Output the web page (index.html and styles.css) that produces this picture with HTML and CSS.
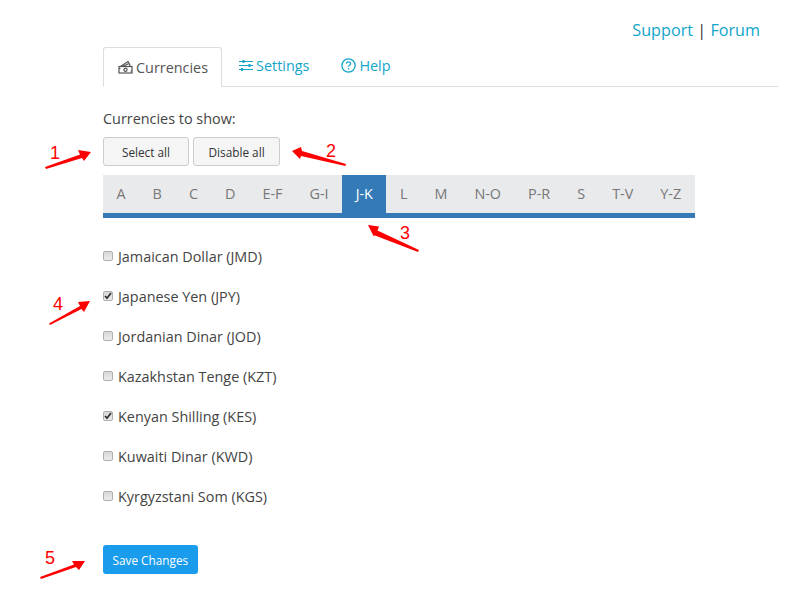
FILE: index.html
```html
<!DOCTYPE html>
<html>
  <head>
    <meta charset="UTF-8">
    <title>Currencies</title>
    <link rel="stylesheet" href="styles.css">
  </head>
  <body>
    <div class="page">
      <p class="top-links"><a href="#">Support</a> | <a href="#">Forum</a></p>

      <div class="tabs">
        <a class="tab active" href="#">
          <svg class="tab-icon" width="15" height="14" viewBox="0 0 15 14" fill="none" stroke="#555" stroke-width="1.2">
            <rect x="1" y="6.500" width="13" height="6.500"/>
            <circle cx="7.500" cy="9.700" r="1.600"/>
            <path d="M2.500 6.500L10 1.500l1.500 2.500M4.500 6.500L11 3.500l1.500 3M1 8.500h1.500M12.500 11H14"/>
          </svg>
          Currencies
        </a>
        <a class="tab" href="#">
          <svg class="tab-icon" width="14" height="13" viewBox="0 0 14 13" fill="none" stroke="#12a5c9" stroke-width="1.100">
            <path d="M0 2.500h14M0 6.500h14M0 10.500h14"/>
            <path d="M4.500 1v3M10.500 5v3M3 9v3" stroke-width="2"/>
          </svg>
          Settings
        </a>
        <a class="tab" href="#">
          <svg class="tab-icon" width="15" height="15" viewBox="0 0 15 15" fill="none" stroke="#12a5c9" stroke-width="1.300">
            <circle cx="7.500" cy="7.500" r="6.600"/>
            <path d="M5.400 5.800c0-1.300 1-2 2.100-2s2.100.7 2.100 1.900c0 1.500-2.100 1.500-2.100 3.100"/>
            <path d="M7.500 10v1.400"/>
          </svg>
          Help
        </a>
      </div>

      <p class="section-title">Currencies to show:</p>

      <div class="actions">
        <button class="btn">Select all</button>
        <button class="btn">Disable all</button>
      </div>

      <div class="letters">
        <a href="#">A</a>
        <a href="#">B</a>
        <a href="#">C</a>
        <a href="#">D</a>
        <a href="#">E-F</a>
        <a href="#">G-I</a>
        <a class="current" href="#">J-K</a>
        <a href="#">L</a>
        <a href="#">M</a>
        <a href="#">N-O</a>
        <a href="#">P-R</a>
        <a href="#">S</a>
        <a href="#">T-V</a>
        <a href="#">Y-Z</a>
      </div>

      <div class="currency-list">
        <label class="currency"><span class="box"></span>Jamaican Dollar (JMD)</label>
        <label class="currency"><span class="box"><svg width="8" height="8" viewBox="0 0 8 8"><path d="M1 4l2 2.200L7 1" fill="none" stroke="#333" stroke-width="1.800"/></svg></span>Japanese Yen (JPY)</label>
        <label class="currency"><span class="box"></span>Jordanian Dinar (JOD)</label>
        <label class="currency"><span class="box"></span>Kazakhstan Tenge (KZT)</label>
        <label class="currency"><span class="box"><svg width="8" height="8" viewBox="0 0 8 8"><path d="M1 4l2 2.200L7 1" fill="none" stroke="#333" stroke-width="1.800"/></svg></span>Kenyan Shilling (KES)</label>
        <label class="currency"><span class="box"></span>Kuwaiti Dinar (KWD)</label>
        <label class="currency"><span class="box"></span>Kyrgyzstani Som (KGS)</label>
      </div>

      <button class="save">Save Changes</button>
    </div>

    <!-- red arrows drawn on top of the screenshot -->
    <svg class="arrows" width="806" height="589" viewBox="0 0 806 589">
      <g fill="#f00">
        <path d="M45 167L80 154.500 78 150 91 152 84 161 82 158 46 169Z"/>
        <path d="M292 151L301 147 302 151 346 164 345.500 166 301 156 300 159Z"/>
        <path d="M368 225L379 226.500 377.500 230.500 419 250 418 252 375 235.500 373.500 236Z"/>
        <path d="M90 301L84 312 81.500 309 50 325 49 323.500 80 306 78 302Z"/>
        <path d="M85 561L79 570 76 567 41 579 40 577 74 564.500 72 561Z"/>
      </g>
    </svg>
    <span class="mark mark-1">1</span>
    <span class="mark mark-2">2</span>
    <span class="mark mark-3">3</span>
    <span class="mark mark-4">4</span>
    <span class="mark mark-5">5</span>
  </body>
</html>
```

FILE: styles.css
```css
html, body {
  height: 589px;
  overflow: hidden;
}

body {
  font-family: "Open Sans", sans-serif;
  font-size: 14.4px;
  color: #333;
  margin: 0;
  padding: 0;
  background-color: #fff;
  position: relative;
}

a {
  text-decoration: none;
}

.page {
  padding: 0 28px 0 103px;
}

.top-links {
  margin: 0;
  padding: 19px 18px 0 0;
  height: 47px;
  box-sizing: border-box;
  text-align: right;
  font-size: 16.200px;
  line-height: 22px;
}

.top-links a {
  color: #12a5c9;
}

.tabs {
  display: flex;
  height: 40px;
  box-sizing: border-box;
  border-bottom: 1px solid #ddd;
}

.tab {
  display: flex;
  align-items: center;
  gap: 3px;
  padding: 0 15px 4px 16px;
  height: 36px;
  margin-right: 1px;
  color: #12a5c9;
}

.tab.active {
  height: 40px;
  box-sizing: border-box;
  padding: 0 13px 0 14px;
  color: #555;
  background-color: #fff;
  border: 1px solid #ddd;
  border-bottom-color: #fff;
  border-radius: 3px 3px 0 0;
}

.tab-icon {
  display: block;
}

.section-title {
  margin: 22px 0 0;
  line-height: 19px;
  color: #444;
}

.actions {
  display: flex;
  gap: 4px;
  margin-top: 9px;
}

.btn {
  min-width: 86px;
  height: 29px;
  padding: 0 14.500px;
  font-family: inherit;
  font-size: 11.800px;
  color: #333;
  background-color: #f5f5f5;
  border: 1px solid #ccc;
  border-radius: 3px;
}

.letters {
  display: flex;
  width: 592px;
  height: 38px;
  margin-top: 9px;
  background-color: #e9eaec;
  border-bottom: 5px solid #337ab7;
}

.letters a {
  padding: 0 13.500px;
  line-height: 38px;
  color: #777;
}

.letters a.current {
  color: #fff;
  background-color: #337ab7;
}

.currency-list {
  display: flex;
  flex-direction: column;
  gap: 20px;
  margin-top: 29px;
}

.currency {
  display: flex;
  align-items: center;
  gap: 5px;
  height: 20px;
  box-sizing: border-box;
  padding-bottom: 2px;
  color: #444;
}

.box {
  display: flex;
  align-items: center;
  justify-content: center;
  width: 8px;
  height: 8px;
  border: 1px solid #b0b0b0;
  border-radius: 2px;
  background: linear-gradient(#d8d8d8, #ececec);
}

.save {
  display: block;
  margin-top: 38px;
  height: 29px;
  padding: 0 9.500px;
  font-family: inherit;
  font-size: 11.800px;
  color: #fff;
  background-color: #1a9cec;
  border: none;
  border-radius: 3px;
}

.arrows {
  position: absolute;
  left: 0;
  top: 0;
  pointer-events: none;
}

.mark {
  position: absolute;
  font-family: "Liberation Sans", sans-serif;
  font-size: 18px;
  line-height: 20px;
  color: #f00;
}

.mark-1 { left: 50px; top: 143px; }
.mark-2 { left: 326px; top: 141px; }
.mark-3 { left: 400px; top: 223px; }
.mark-4 { left: 53px; top: 294px; }
.mark-5 { left: 45px; top: 548px; }
```
